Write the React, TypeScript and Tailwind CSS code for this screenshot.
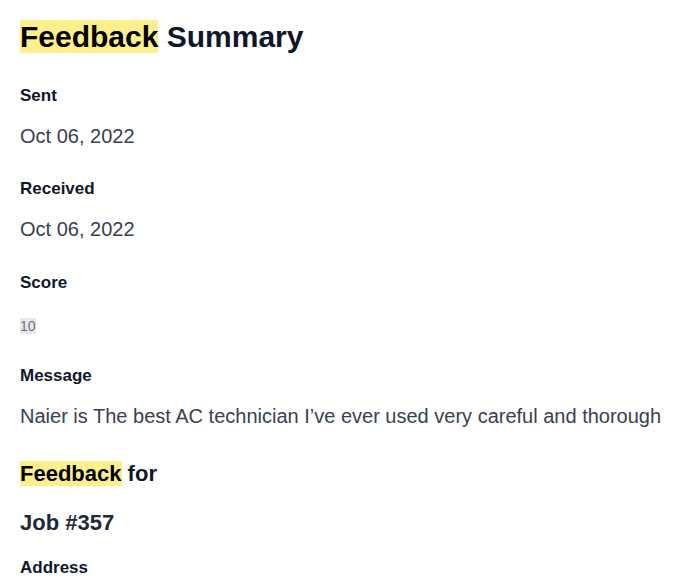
/**
 * FeedbackSummary - read-only summary of a customer's feedback for a job
 */

interface Field {
  label: string
  value: string
}

const fields: Field[] = [
  { label: 'Sent', value: 'Oct 06, 2022' },
  { label: 'Received', value: 'Oct 06, 2022' },
]

function Label({ children, className = '' }: { children: React.ReactNode; className?: string }): JSX.Element {
  return <h4 className={`text-[17px] leading-6 font-bold text-[#0f172a] ${className}`}>{children}</h4>
}

export default function App(): JSX.Element {
  return (
    <div className="min-h-screen bg-white px-5 pt-[17px] font-['Liberation_Sans',Arial,sans-serif]">
      <h1 className="text-[30px] leading-10 font-bold text-[#0f172a]">
        <mark className="bg-[#fdef8c] text-black">Feedback</mark> Summary
      </h1>

      <div className="mt-[27px]">
        {fields.map((f, i) => (
          <div key={f.label} className={i > 0 ? 'mt-[27px]' : ''}>
            <Label>{f.label}</Label>
            <p className="mt-[14px] text-[20px] leading-7 text-[#374151]">{f.value}</p>
          </div>
        ))}

        <div className="mt-[28px]">
          <Label>Score</Label>
          <span className="mt-[23px] inline-block bg-[#e8e8ea] text-[14px] leading-4 text-[#6b7280]">10</span>
        </div>

        <div className="mt-[26px]">
          <Label>Message</Label>
          <p className="mt-[14px] text-[20px] leading-7 text-[#374151]">
            Naier is The best AC technician I’ve ever used very careful and thorough
          </p>
        </div>
      </div>

      <h2 className="mt-7 text-[22px] leading-8 font-bold text-[#0f172a]">
        <mark className="bg-[#fdef8c] text-black">Feedback</mark> for
      </h2>
      <h2 className="mt-[17px] text-[22px] leading-8 font-bold text-[#1e293b]">Job #357</h2>
      <Label className="mt-[17px]">Address</Label>
    </div>
  )
}
